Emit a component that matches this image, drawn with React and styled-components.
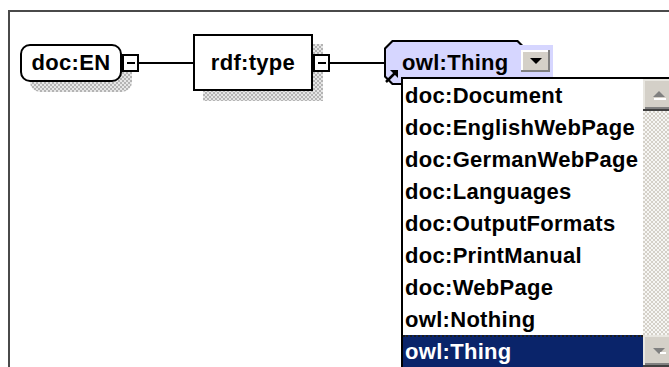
import styled, { createGlobalStyle } from "styled-components";

const GlobalStyle = createGlobalStyle`
  html, body {
    margin: 0;
    padding: 0;
    background: #fff;
    overflow: hidden;
  }
  body {
    font-family: "Liberation Sans", Arial, sans-serif;
  }
`;

const options = [
  "doc:Document",
  "doc:EnglishWebPage",
  "doc:GermanWebPage",
  "doc:Languages",
  "doc:OutputFormats",
  "doc:PrintManual",
  "doc:WebPage",
  "owl:Nothing",
  "owl:Thing",
];

export default function App() {
  return (
    <>
      <GlobalStyle />
      <Page>
        <Frame>
          <Row>
            <ShadowWrap $round>
              <NodeBox $w={102} $h={38} $round>
                doc:EN
              </NodeBox>
            </ShadowWrap>
            <Toggle />
            <Connector />
            <ShadowWrap>
              <NodeBox $w={120} $h={57}>
                rdf:type
              </NodeBox>
            </ShadowWrap>
            <Toggle />
            <Connector />
            <OwlNode>
              <OctagonOuter>
                <OctagonInner />
              </OctagonOuter>
              <OwlLabel>owl:Thing</OwlLabel>
              <ComboBacking>
                <ComboButton>
                  <svg width="12" height="7" viewBox="0 0 12 7">
                    <polygon points="0,0 12,0 6,6" fill="#000" />
                  </svg>
                </ComboButton>
              </ComboBacking>
              <RefArrow width="16" height="16" viewBox="0 0 16 16">
                <line x1="2" y1="14" x2="11" y2="5" stroke="#000" strokeWidth="2.5" />
                <polygon points="6,2 14,2 14,10" fill="#000" />
              </RefArrow>
              <DropList>
                <Options>
                  {options.map((o) => (
                    <Option key={o} $selected={o === "owl:Thing"}>
                      {o}
                    </Option>
                  ))}
                </Options>
                <ScrollBar>
                  <ScrollButton>
                    <svg width="16" height="10" viewBox="0 0 16 10">
                      <polygon points="8,1 14,7 2,7" fill="#808080" />
                      <rect x="3" y="8" width="12" height="2" fill="#fff" />
                    </svg>
                  </ScrollButton>
                  <Track />
                  <ScrollButton>
                    <svg width="16" height="10" viewBox="0 0 16 10">
                      <polygon points="2,2 14,2 8,8" fill="#808080" />
                      <rect x="9" y="6" width="6" height="2" fill="#fff" />
                    </svg>
                  </ScrollButton>
                </ScrollBar>
              </DropList>
            </OwlNode>
          </Row>
        </Frame>
      </Page>
    </>
  );
}

const Page = styled.div`
  width: 669px;
  height: 367px;
  overflow: hidden;
  padding: 10px 0 0 8px;
  box-sizing: border-box;
`;

const Frame = styled.div`
  height: 100%;
  border-top: 2px solid #4a4a4a;
  border-left: 2px solid #4a4a4a;
  padding: 22px 0 0 10px;
  box-sizing: border-box;
`;

const Row = styled.div`
  display: flex;
  align-items: center;
  height: 57px;
`;

const ShadowWrap = styled.div`
  position: relative;
  z-index: 0;

  &::after {
    content: "";
    position: absolute;
    left: 10px;
    top: 10px;
    width: 100%;
    height: 100%;
    z-index: -1;
    border-radius: ${(p) => (p.$round ? "10px" : "0")};
    background: repeating-conic-gradient(#b4b4b4 0% 25%, #e6e6e6 0% 50%) 0 0 / 4px 4px;
  }
`;

const NodeBox = styled.div`
  position: relative;
  width: ${(p) => p.$w}px;
  height: ${(p) => p.$h}px;
  border: 2px solid #000;
  border-radius: ${(p) => (p.$round ? "10px" : "0")};
  background: #fff;
  box-sizing: border-box;
  display: flex;
  align-items: center;
  justify-content: center;
  font-weight: bold;
  font-size: 22px;
  letter-spacing: 0.3px;
  color: #000;
`;

const Toggle = styled.div`
  position: relative;
  z-index: 1;
  width: 17px;
  height: 18px;
  border: 2px solid #000;
  background: #fff;
  box-sizing: border-box;
  display: flex;
  align-items: center;
  justify-content: center;

  &::before {
    content: "";
    width: 8px;
    height: 2px;
    background: #000;
  }
`;

const Connector = styled.div`
  width: 54px;
  height: 2px;
  background: #000;
`;

const OwlNode = styled.div`
  position: relative;
  width: 142px;
  height: 45px;
  display: flex;
  align-items: center;
`;

const octagon = (c) =>
  `polygon(${c}px 0, calc(100% - ${c}px) 0, 100% ${c}px, 100% calc(100% - ${c}px), calc(100% - ${c}px) 100%, ${c}px 100%, 0 calc(100% - ${c}px), 0 ${c}px)`;

const OctagonOuter = styled.div`
  position: absolute;
  inset: 0;
  background: #000;
  clip-path: ${octagon(8)};
`;

const OctagonInner = styled.div`
  position: absolute;
  inset: 2px;
  background: #d6d6ff;
  clip-path: ${octagon(7)};
`;

const OwlLabel = styled.span`
  position: relative;
  padding-left: 18px;
  font-weight: bold;
  font-size: 22px;
  letter-spacing: 0.3px;
  color: #000;
`;

const ComboBacking = styled.div`
  position: absolute;
  left: 134px;
  top: 5px;
  width: 35px;
  height: 32px;
  background: #d6d6ff;
  display: flex;
  align-items: center;
  justify-content: center;
`;

const ComboButton = styled.div`
  width: 29px;
  height: 22px;
  background: #d4d0c8;
  box-sizing: border-box;
  box-shadow: inset -2px -2px #808080, inset 2px 2px #fff;
  display: flex;
  align-items: center;
  justify-content: center;
`;

const RefArrow = styled.svg`
  position: absolute;
  left: 0;
  top: 28px;
`;

const DropList = styled.div`
  position: absolute;
  left: 17px;
  top: 37px;
  width: 274px;
  height: 290px;
  border-top: 2px solid #000;
  border-left: 2px solid #000;
  box-sizing: border-box;
  background: #fff;
  display: flex;
  z-index: 2;
`;

const Options = styled.div`
  width: 240px;
  display: flex;
  flex-direction: column;
`;

const Option = styled.div`
  height: 32px;
  line-height: 30px;
  padding-left: 2px;
  white-space: nowrap;
  font-weight: bold;
  font-size: 22px;
  letter-spacing: 0.3px;
  color: ${(p) => (p.$selected ? "#fff" : "#000")};
  background: ${(p) => (p.$selected ? "#0a246a" : "transparent")};
  box-sizing: border-box;
  border-top: 2px dotted ${(p) => (p.$selected ? "#1c1c1c" : "transparent")};
`;

const ScrollBar = styled.div`
  width: 32px;
  display: flex;
  flex-direction: column;
`;

const ScrollButton = styled.div`
  height: 32px;
  background: #d4d0c8;
  box-shadow: inset -2px -2px #404040, inset 2px 2px #e8e6e0, inset -4px -4px #808080;
  display: flex;
  align-items: center;
  justify-content: center;
`;

const Track = styled.div`
  flex: 1;
  background: repeating-conic-gradient(#d4d0c8 0% 25%, #f6f6f4 0% 50%) 0 0 / 4px 4px;
`;
